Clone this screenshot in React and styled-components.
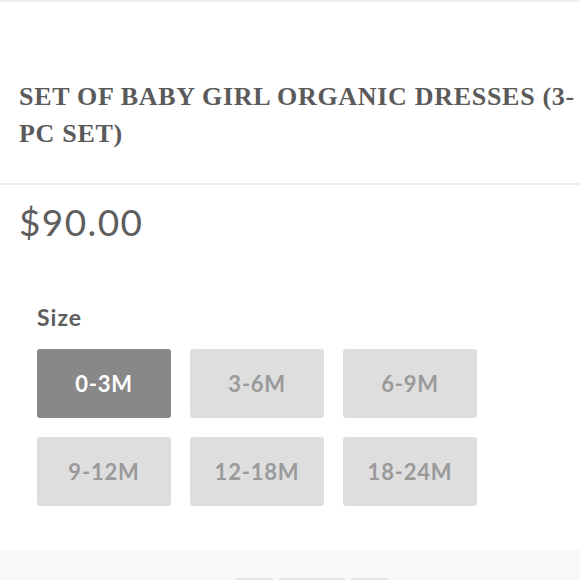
import React from "react";
import styled, { createGlobalStyle } from "styled-components";

const Global = createGlobalStyle`
  html, body { margin: 0; padding: 0; background: #fff; }
  body { width: 580px; height: 580px; overflow: hidden; }
  * { box-sizing: border-box; }
`;

const Page = styled.div`
  width: 580px;
  height: 580px;
  display: flex;
  flex-direction: column;
  background: #fff;
`;

const TopEdge = styled.div`
  height: 1px;
  background: #ececec;
  box-shadow: 0 1px 2px rgba(0, 0, 0, 0.07);
`;

const Title = styled.h1`
  margin: 77px 0 0;
  padding: 0 0 0 19px;
  font-family: "Liberation Serif", "Times New Roman", serif;
  font-weight: 700;
  font-size: 26px;
  letter-spacing: 0.7px;
  line-height: 37px;
  color: #5a5a5a;
  text-transform: uppercase;
`;

const Divider = styled.hr`
  margin: 31px 0 0;
  border: 0;
  height: 2px;
  background: #ececec;
`;

const Price = styled.div`
  margin-top: 15px;
  padding: 0 19px;
  font-family: Lato, "Open Sans", sans-serif;
  font-weight: 400;
  font-size: 37px;
  letter-spacing: 1.4px;
  line-height: 1.2;
  color: #5e5e5e;
`;

const Options = styled.section`
  margin-top: 60px;
  padding: 0 37px;
  display: flex;
  flex-direction: column;
  gap: 17px;
`;

const Label = styled.div`
  font-family: Lato, "Open Sans", sans-serif;
  font-weight: 700;
  font-size: 23px;
  letter-spacing: 1px;
  line-height: 1.2;
  color: #5e5e5e;
`;

const Grid = styled.div`
  display: grid;
  grid-template-columns: repeat(3, 134px);
  grid-auto-rows: 69px;
  gap: 19px;
`;

const SizeButton = styled.button`
  border: 0;
  border-radius: 3px;
  padding: 0;
  display: flex;
  align-items: center;
  justify-content: center;
  font-family: Lato, "Open Sans", sans-serif;
  font-weight: 700;
  font-size: 22px;
  letter-spacing: 0.8px;
  background: ${(p) => (p.$active ? "#888888" : "#dedede")};
  color: ${(p) => (p.$active ? "#ffffff" : "#9a9a9a")};
  cursor: pointer;
`;

const Footer = styled.div`
  margin-top: auto;
  height: 30px;
  background: #f8f8f8;
  display: flex;
  justify-content: center;
  align-items: flex-start;
  gap: 4px;
  padding: 28px 0 0 43px;
`;

const FooterTab = styled.div`
  width: ${(p) => p.$w}px;
  height: 6px;
  background: #e4e4e4;
  border-radius: 4px 4px 0 0;
`;

const sizes = ["0-3M", "3-6M", "6-9M", "9-12M", "12-18M", "18-24M"];

export default function App() {
  return (
    <Page>
      <Global />
      <TopEdge />
      <Title>Set of Baby Girl Organic Dresses (3-PC Set)</Title>
      <Divider />
      <Price>$90.00</Price>
      <Options>
        <Label>Size</Label>
        <Grid>
          {sizes.map((s, i) => (
            <SizeButton key={s} $active={i === 0}>
              {s}
            </SizeButton>
          ))}
        </Grid>
      </Options>
      <Footer>
        <FooterTab $w={40} />
        <FooterTab $w={68} />
        <FooterTab $w={39} />
      </Footer>
    </Page>
  );
}
